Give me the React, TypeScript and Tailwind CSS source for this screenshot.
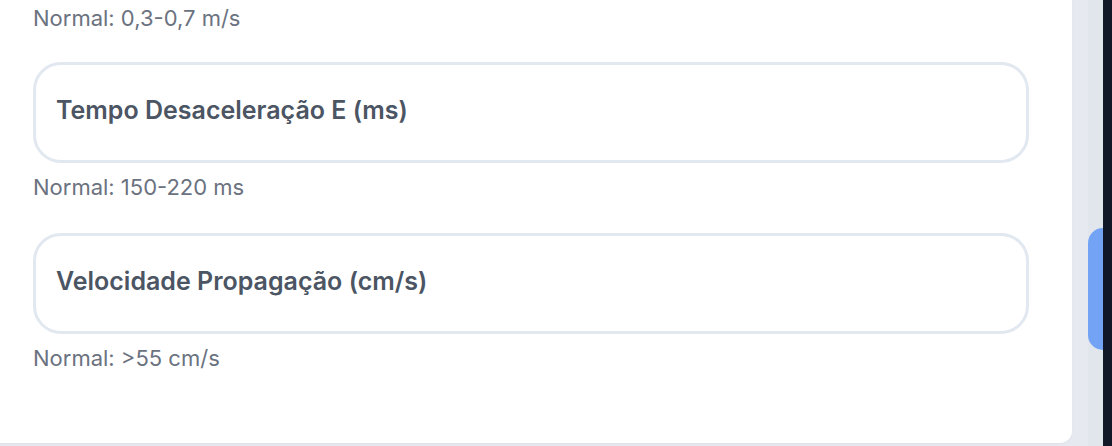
import React from 'react';

const fields = [
  { label: 'Tempo Desaceleração E (ms)', hint: 'Normal: 150-220 ms' },
  { label: 'Velocidade Propagação (cm/s)', hint: 'Normal: >55 cm/s' },
];

const Field: React.FC<{ label: string; hint: string }> = ({ label, hint }) => (
  <div className="flex flex-col">
    <div className="h-[101px] rounded-[28px] border-[3px] border-[#e2e8f0] px-5 flex items-center pb-1">
      <span className="text-[25px] font-semibold text-[#4b5563]">{label}</span>
    </div>
    <p className="mt-[10px] text-[22px] leading-[28px] text-[#6b7280]">{hint}</p>
  </div>
);

export default function App() {
  return (
    <div className="flex h-[446px] w-[1112px] overflow-hidden bg-[#e6e9f0]" style={{ fontFamily: 'Inter, "Noto Sans", sans-serif' }}>
      <div className="flex-1 pb-[3px]">
        <div className="h-full bg-white rounded-br-xl shadow-[0_1px_2px_rgba(0,0,0,0.04)] px-[33px] pr-[43px] pt-1">
          <p className="text-[22px] leading-[28px] text-[#6b7280]">Normal: 0,3-0,7 m/s</p>
          <div className="mt-[30px] flex flex-col gap-8">
            {fields.map((f) => (
              <Field key={f.label} label={f.label} hint={f.hint} />
            ))}
          </div>
        </div>
      </div>
      <div className="w-4" />
      <div className="w-[15px] bg-[#e1e5ec] pt-[228px]">
        <div className="h-[122px] rounded-l-full bg-[#72a3f5]" />
      </div>
      <div className="w-[9px] bg-[#111827]" />
    </div>
  );
}
